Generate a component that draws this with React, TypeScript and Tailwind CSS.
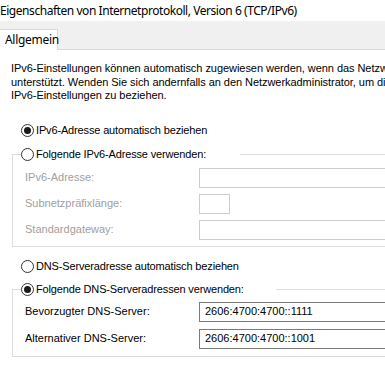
import React from 'react';

const body = { fontFamily: '"Liberation Sans", Arial, sans-serif' };
const ui = { fontFamily: '"Noto Sans", "Liberation Sans", sans-serif' };

const Radio = ({ checked, label }: { checked?: boolean; label: string }) => (
  <div className="flex items-center h-[15px]">
    <span className="w-[13px] h-[13px] rounded-full border border-[#333333] bg-white flex items-center justify-center">
      {checked && <span className="w-[7px] h-[7px] rounded-full bg-[#1a1a1a]" />}
    </span>
    <span className="ml-[2px] text-[11px] text-black leading-none whitespace-nowrap tracking-[-0.15px]">{label}</span>
  </div>
);

const Row = ({ label, value, disabled, small }: { label: string; value?: string; disabled?: boolean; small?: boolean }) => (
  <div className="flex items-center">
    <span className={`w-[174px] text-[11px] leading-none ${disabled ? 'text-[#a0a0a0]' : 'text-black'}`}>{label}</span>
    <div
      className={`h-[20px] flex items-center px-[5px] text-[11px] text-black bg-white border ${
        disabled ? 'border-[#cccccc]' : 'border-[#7a7a7a]'
      } ${small ? 'w-[31px]' : 'w-[230px]'}`}
    >
      {value}
    </div>
  </div>
);

const App = () => {
  return (
    <div className="w-[385px] h-[367px] overflow-hidden bg-white select-none" style={body}>
      <div className="h-[21px] flex items-center text-[12px] text-black whitespace-nowrap tracking-[-0.45px]" style={ui}>
        Eigenschaften von Internetprotokoll, Version 6 (TCP/IPv6)
      </div>

      <div className="h-[29px] bg-[#f0f0f0] flex items-end border-b border-[#d9d9d9]">
        <div
          className="h-[21px] w-[58px] -mb-px bg-white border border-b-0 border-l-0 border-[#d9d9d9] flex items-center pl-[5px] text-[12px] text-black tracking-[-0.3px]"
          style={ui}
        >
          Allgemein
        </div>
      </div>

      <div className="pt-[12px] pl-[11px]">
        <p className="text-[11px] leading-[13.5px] text-black whitespace-nowrap tracking-[-0.05px]">
          IPv6-Einstellungen können automatisch zugewiesen werden, wenn das Netzwerk diese Funktion
          <br />
          unterstützt. Wenden Sie sich andernfalls an den Netzwerkadministrator, um die geeigneten
          <br />
          IPv6-Einstellungen zu beziehen.
        </p>

        <div className="mt-[20px] pl-[10px]">
          <Radio checked label="IPv6-Adresse automatisch beziehen" />
        </div>

        <fieldset className="mt-[9px] ml-px w-[400px] border border-[#dcdcdc] pl-[12px] pb-[6px]">
          <legend className="-ml-[4px] w-[219px] h-[15px] bg-white">
            <Radio label="Folgende IPv6-Adresse verwenden:" />
          </legend>
          <div className="flex flex-col gap-[6px] pt-[6px]">
            <Row label="IPv6-Adresse:" disabled />
            <Row label="Subnetzpräfixlänge:" disabled small />
            <Row label="Standardgateway:" disabled />
          </div>
        </fieldset>

        <div className="mt-[12px] pl-[10px]">
          <Radio label="DNS-Serveradresse automatisch beziehen" />
        </div>

        <fieldset className="mt-[8px] ml-px w-[400px] border border-[#dcdcdc] pl-[12px] pb-[7px]">
          <legend className="-ml-[4px] w-[255px] h-[15px] bg-white">
            <Radio checked label="Folgende DNS-Serveradressen verwenden:" />
          </legend>
          <div className="flex flex-col gap-[7px] pt-[5px]">
            <Row label="Bevorzugter DNS-Server:" value="2606:4700:4700::1111" />
            <Row label="Alternativer DNS-Server:" value="2606:4700:4700::1001" />
          </div>
        </fieldset>
      </div>
    </div>
  );
};

export default App;
